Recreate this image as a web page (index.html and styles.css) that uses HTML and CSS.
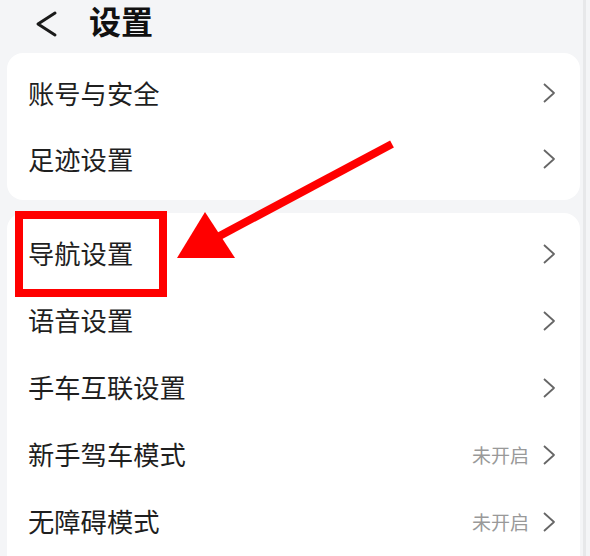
FILE: index.html
```html
<!DOCTYPE html>
<html lang="zh-CN">
<head>
<meta charset="utf-8">
<link rel="stylesheet" href="styles.css">
</head>
<body>
<div class="page">
  <div class="main">
    <header class="header">
      <svg class="back" width="24" height="28" viewBox="0 0 24 28"><polyline points="21,3 4,14 21,25" fill="none" stroke="#1a1a1a" stroke-width="3" stroke-linecap="round" stroke-linejoin="round"/></svg>
      <h1 class="title">设置</h1>
    </header>
    <section class="card card-a">
      <div class="row"><span class="label">账号与安全</span><span class="right"><svg class="chev" width="14" height="22" viewBox="0 0 14 22"><polyline points="2,2 12,11 2,20" fill="none" stroke="#666" stroke-width="1.8" stroke-linejoin="round"/></svg></span></div>
      <div class="row"><span class="label">足迹设置</span><span class="right"><svg class="chev" width="14" height="22" viewBox="0 0 14 22"><polyline points="2,2 12,11 2,20" fill="none" stroke="#666" stroke-width="1.8" stroke-linejoin="round"/></svg></span></div>
    </section>
    <section class="card card-b">
      <div class="row"><span class="label">导航设置</span><span class="right"><svg class="chev" width="14" height="22" viewBox="0 0 14 22"><polyline points="2,2 12,11 2,20" fill="none" stroke="#666" stroke-width="1.8" stroke-linejoin="round"/></svg></span></div>
      <div class="row"><span class="label">语音设置</span><span class="right"><svg class="chev" width="14" height="22" viewBox="0 0 14 22"><polyline points="2,2 12,11 2,20" fill="none" stroke="#666" stroke-width="1.8" stroke-linejoin="round"/></svg></span></div>
      <div class="row"><span class="label">手车互联设置</span><span class="right"><svg class="chev" width="14" height="22" viewBox="0 0 14 22"><polyline points="2,2 12,11 2,20" fill="none" stroke="#666" stroke-width="1.8" stroke-linejoin="round"/></svg></span></div>
      <div class="row"><span class="label">新手驾车模式</span><span class="right"><span class="status">未开启</span><svg class="chev" width="14" height="22" viewBox="0 0 14 22"><polyline points="2,2 12,11 2,20" fill="none" stroke="#666" stroke-width="1.8" stroke-linejoin="round"/></svg></span></div>
      <div class="row"><span class="label">无障碍模式</span><span class="right"><span class="status">未开启</span><svg class="chev" width="14" height="22" viewBox="0 0 14 22"><polyline points="2,2 12,11 2,20" fill="none" stroke="#666" stroke-width="1.8" stroke-linejoin="round"/></svg></span></div>
    </section>
  </div>
  <div class="rail"></div>
</div>
<div class="highlight"></div>
<svg class="arrow" width="590" height="556" viewBox="0 0 590 556">
  <line x1="392" y1="144" x2="212" y2="240" stroke="#ff0000" stroke-width="8"/>
  <polygon points="205,212 177,258 235,258" fill="#ff0000"/>
</svg>
</body>
</html>
```

FILE: styles.css
```css
* { box-sizing: border-box; }
html, body {
  margin: 0;
  padding: 0;
  width: 590px;
  height: 556px;
  overflow: hidden;
  background: #f4f5f7;
  font-family: "Noto Sans CJK SC", "Noto Sans", sans-serif;
  color: #1f1f1f;
}
.page {
  display: flex;
  position: relative;
  height: 556px;
  overflow: hidden;
}
.main {
  width: 580px;
  padding-left: 7px;
}
.rail {
  width: 3px;
  margin-left: 3px;
  background: #e7e8ea;
}
.header {
  height: 44px;
  display: flex;
  align-items: center;
  margin-bottom: 9px;
}
.back {
  margin: 3px 0 0 27px;
}
.title {
  margin: 0 0 5px 31px;
  font-size: 32px;
  font-weight: 700;
  line-height: 1;
  color: #111;
}
.card {
  background: #fff;
  border-radius: 16px;
}
.card-a {
  padding: 7px 0 8px;
  margin-bottom: 13px;
}
.card-a .row { height: 66px; }
.card-b {
  padding: 7px 0 0;
  height: 343px;
  border-radius: 16px 16px 0 0;
}
.card-b .row { height: 67px; }
.row {
  display: flex;
  align-items: center;
  justify-content: space-between;
  padding: 0 24px 0 21px;
}
.label {
  font-size: 26.3px;
  line-height: 1;
}
.right {
  display: flex;
  align-items: center;
}
.status {
  font-size: 19px;
  color: #999;
  margin-right: 13px;
  line-height: 1;
}
.chev { display: block; }
.highlight {
  position: absolute;
  left: 15px;
  top: 211px;
  width: 152px;
  height: 86px;
  border: 8px solid #ff0000;
}
.arrow {
  position: absolute;
  left: 0;
  top: 0;
  pointer-events: none;
}
```
